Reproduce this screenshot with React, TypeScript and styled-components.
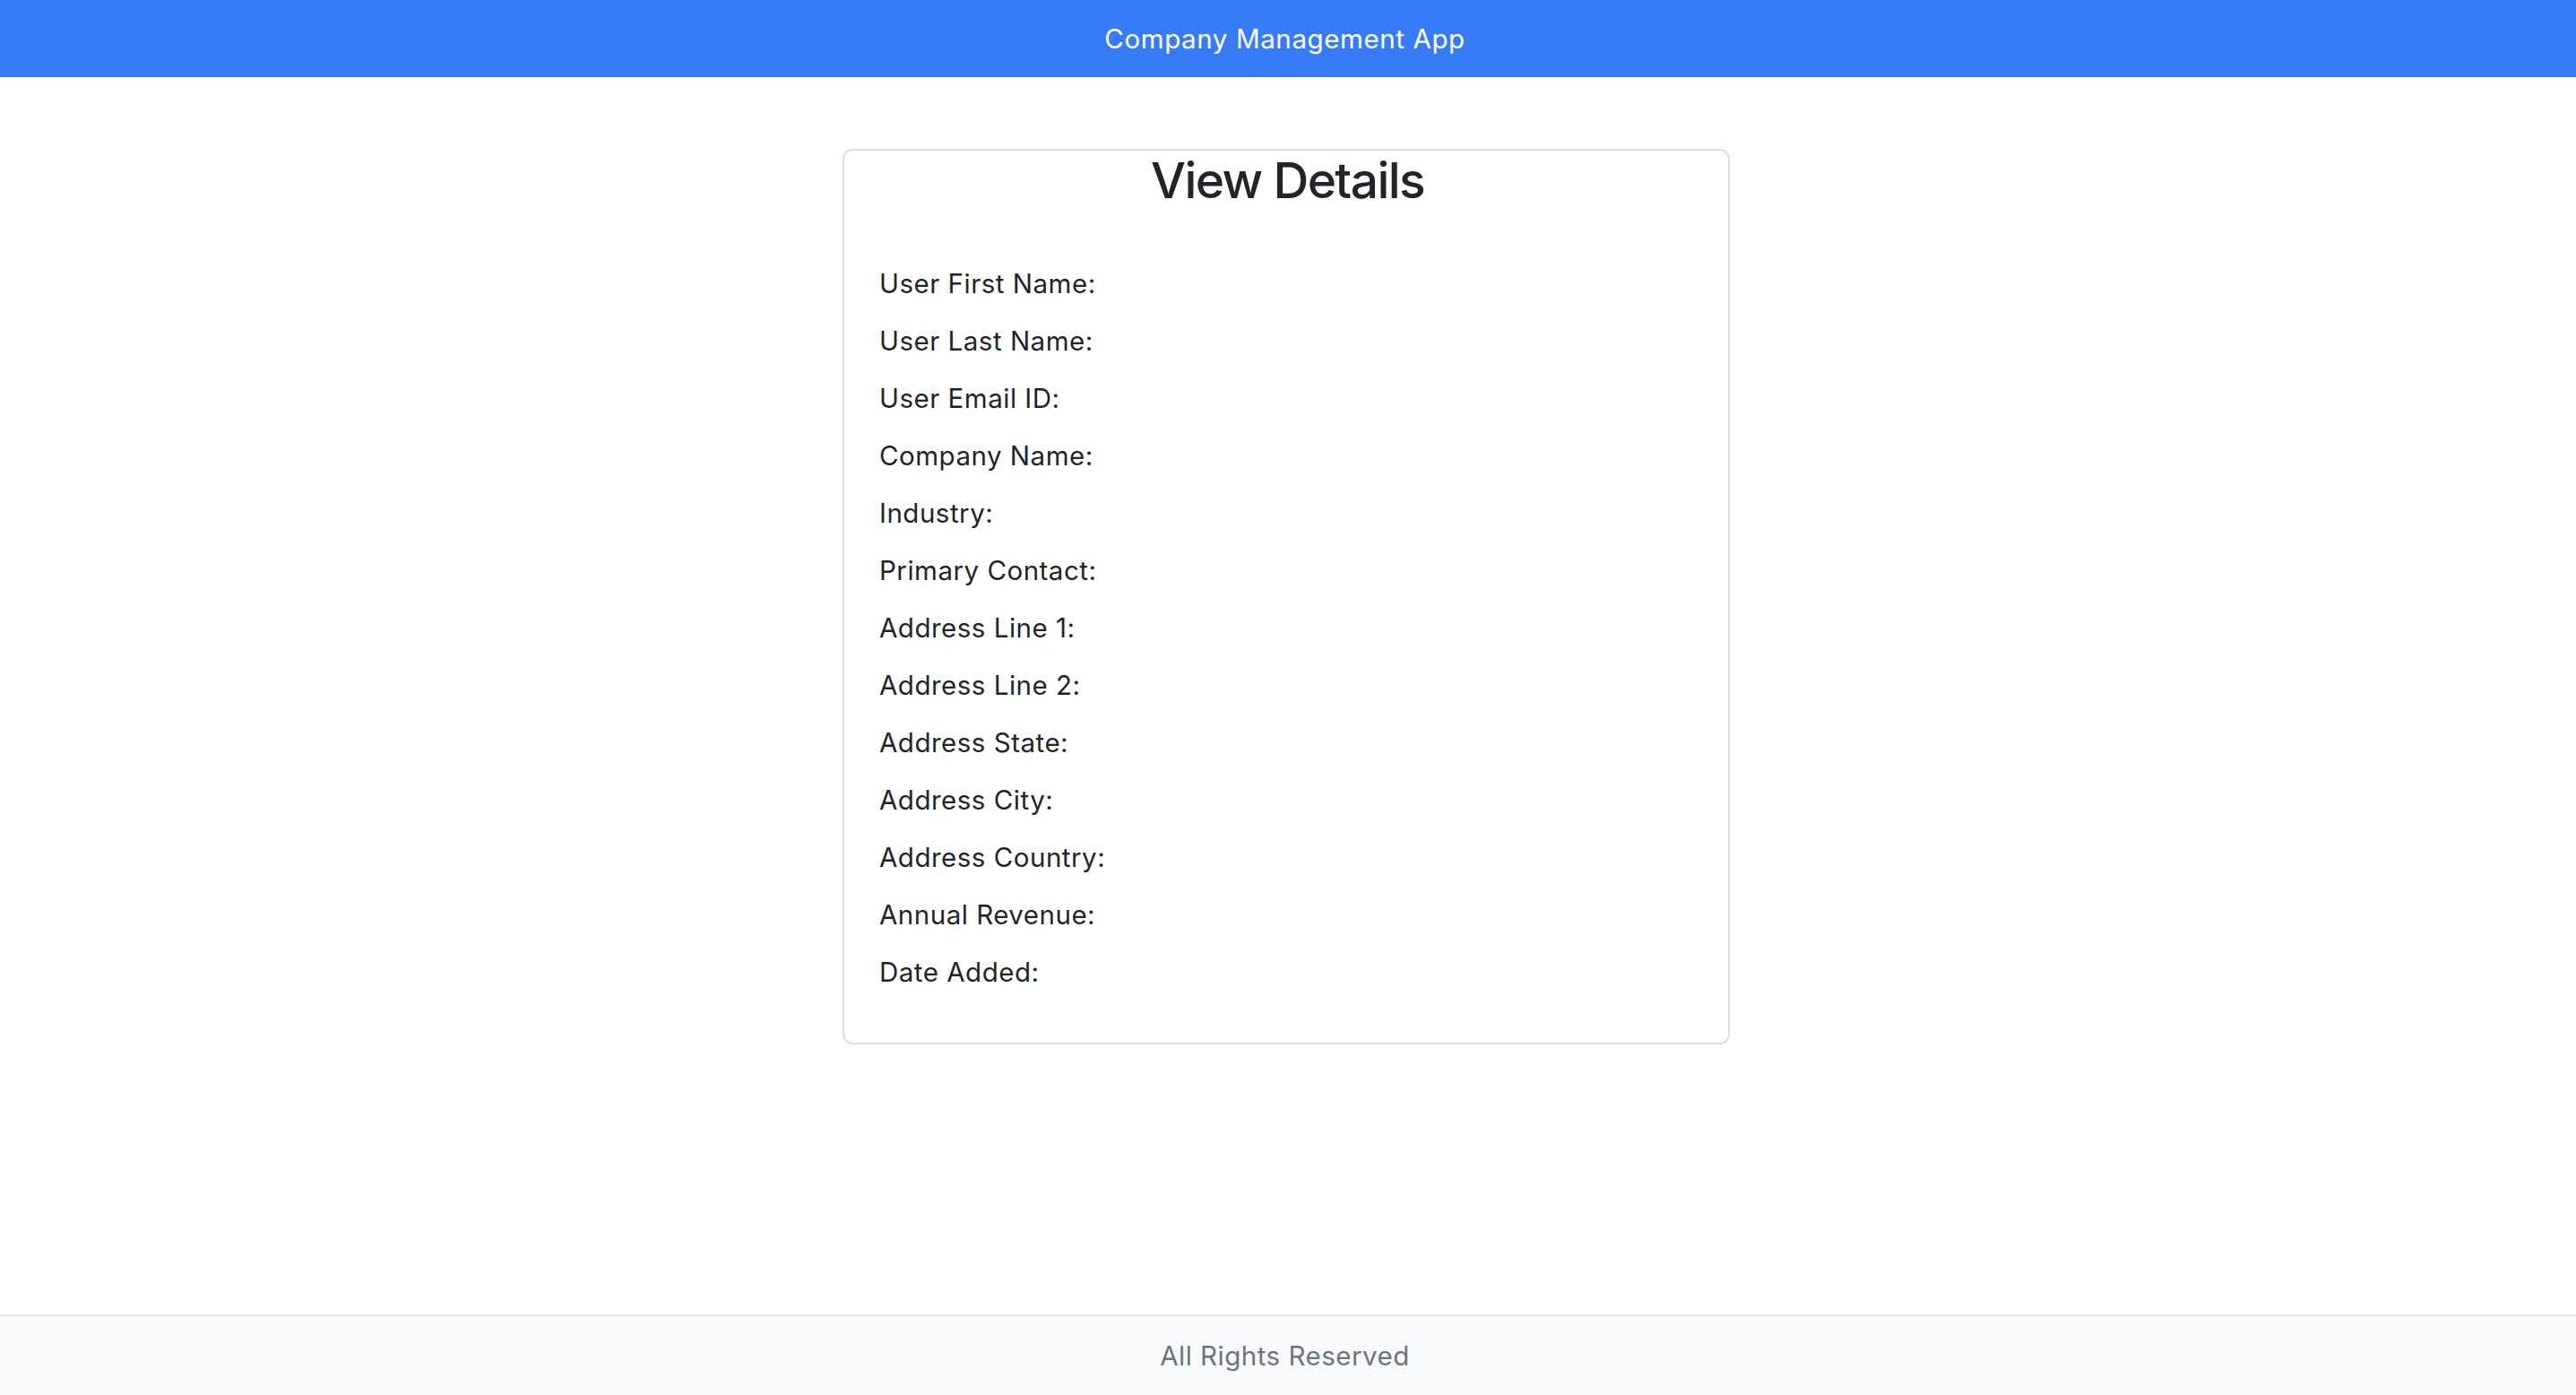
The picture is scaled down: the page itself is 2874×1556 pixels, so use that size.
import React from "react";
import styled, { createGlobalStyle } from "styled-components";

const GlobalStyle = createGlobalStyle`
  html, body {
    margin: 0;
    padding: 0;
    background: #ffffff;
  }
  body {
    font-family: Inter, "Noto Sans", "Liberation Sans", sans-serif;
    color: #212529;
  }
  * { box-sizing: border-box; }
`;

const Page = styled.div`
  min-height: 100vh;
  display: flex;
  flex-direction: column;
`;

const Header = styled.header`
  height: 86px;
  background: #377cf6;
  color: #ffffff;
  display: flex;
  align-items: center;
  justify-content: center;
  padding-right: 7px;
  font-size: 29.5px;
  letter-spacing: 0.6px;
  font-weight: 400;
`;

const Main = styled.main`
  flex: 1;
  display: flex;
  justify-content: center;
  align-items: flex-start;
  padding: 80px 4px 0 0;
`;

const Card = styled.section`
  width: 990px;
  border: 2px solid #dfdfdf;
  border-radius: 11px;
  padding: 0 36px 57px 39px;
  display: flex;
  flex-direction: column;
`;

const Title = styled.h2`
  margin: 0 0 59px 0;
  text-align: center;
  font-size: 55px;
  line-height: 67px;
  font-weight: 500;
  letter-spacing: -1.6px;
  color: #212529;
`;

const Row = styled.p`
  margin: 0 0 20px 0;
  font-size: 29.5px;
  line-height: 44px;
  letter-spacing: 0.5px;
  color: #212529;
  &:last-child { margin-bottom: 0; }
`;

const Footer = styled.footer`
  height: 90px;
  background: #f8f9fa;
  border-top: 2px solid #e6e6e6;
  display: flex;
  align-items: center;
  justify-content: center;
  padding-right: 7px;
  color: #6c757d;
  font-size: 29.5px;
  letter-spacing: 0.5px;
`;

const labels = [
  "User First Name:",
  "User Last Name:",
  "User Email ID:",
  "Company Name:",
  "Industry:",
  "Primary Contact:",
  "Address Line 1:",
  "Address Line 2:",
  "Address State:",
  "Address City:",
  "Address Country:",
  "Annual Revenue:",
  "Date Added:",
];

export default function App() {
  return (
    <Page>
      <GlobalStyle />
      <Header>Company Management App</Header>
      <Main>
        <Card>
          <Title>View Details</Title>
          {labels.map((l) => (
            <Row key={l}>{l}</Row>
          ))}
        </Card>
      </Main>
      <Footer>All Rights Reserved</Footer>
    </Page>
  );
}
